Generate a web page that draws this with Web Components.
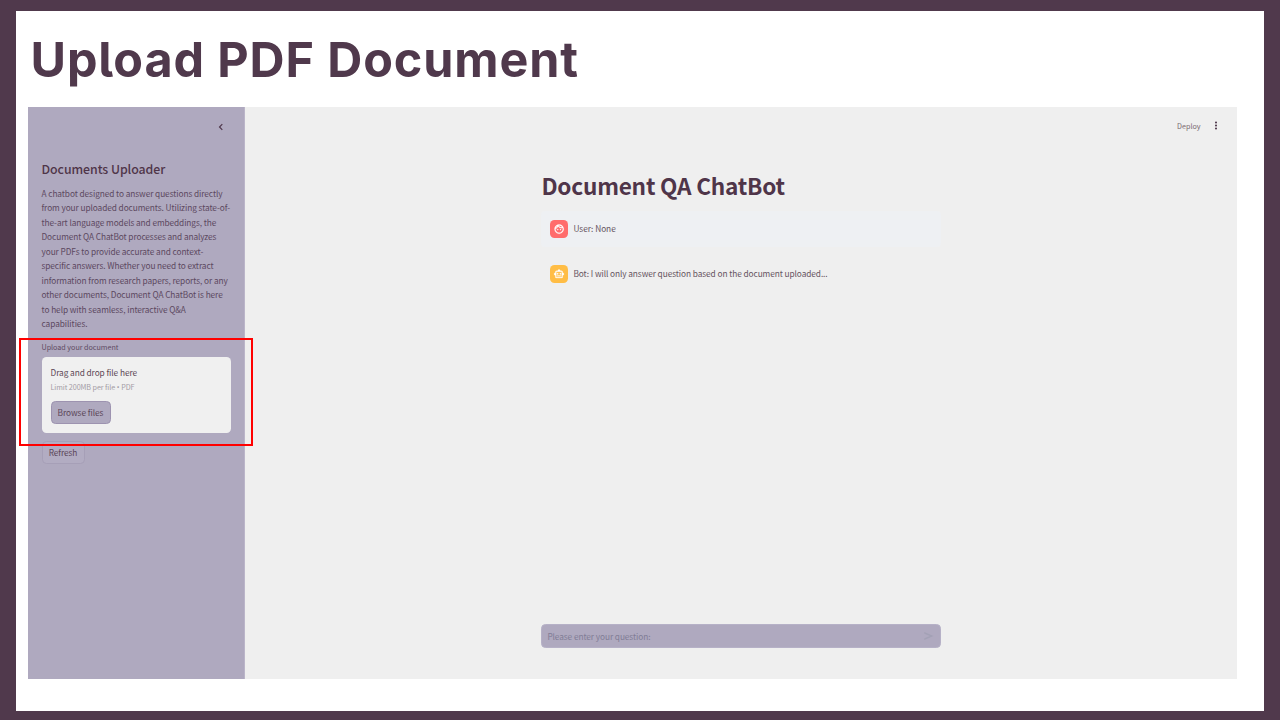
<!DOCTYPE html>
<html lang="en">
<head>
<meta charset="utf-8">
<title>Upload PDF Document</title>
<style>
html,body{margin:0;width:1280px;height:720px;overflow:hidden;background:#50394c}
body{font-family:"Noto Sans CJK SC","Noto Sans",sans-serif}
</style>
</head>
<body>
<slide-page></slide-page>
<script>
const define = (name, html, after) => customElements.define(name, class extends HTMLElement {
  constructor() {
    super();
    this.attachShadow({ mode: "open" }).innerHTML = html;
  }
  connectedCallback() { if (after) after.call(this); }
});

/* One line of text whose tracking is set so that it spans the given width. */
define("text-line", `<style>
:host{display:block;white-space:nowrap}
span{display:inline-block;white-space:pre}
</style><span><slot></slot></span>`, function () {
  const span = this.shadowRoot.querySelector("span");
  const want = parseFloat(this.getAttribute("span"));
  const gap = (want - span.getBoundingClientRect().width) / this.textContent.length;
  span.style.letterSpacing = gap.toFixed(4) + "px";
});

define("user-avatar", `<style>
:host{display:block;width:18px;height:18px;border-radius:4.5px;background:#ff6c6c}
svg{display:block;width:18px;height:18px}
</style><svg viewBox="0 0 18 18"><g transform="translate(3.6 3.6) scale(.46)" fill="#fff" stroke="#fff" stroke-width=".5"><path d="M10.25 13c0 .69-.56 1.25-1.25 1.25S7.75 13.69 7.75 13s.56-1.25 1.25-1.25 1.25.56 1.25 1.25zM15 11.75c-.69 0-1.25.56-1.25 1.25s.56 1.25 1.25 1.25 1.25-.56 1.25-1.25-.56-1.25-1.25-1.25zm7 .25c0 5.52-4.48 10-10 10S2 17.52 2 12 6.48 2 12 2s10 4.48 10 10zM10.66 4.12C12.06 6.44 14.6 8 17.5 8c.46 0 .91-.05 1.34-.12C17.44 5.56 14.9 4 12 4c-.46 0-.91.05-1.34.12zM4.42 9.47a8.046 8.046 0 0 0 3.66-4.44 8.046 8.046 0 0 0-3.66 4.44zM20 12c0-.78-.12-1.53-.33-2.24-.7.15-1.42.24-2.17.24a10 10 0 0 1-7.76-3.69A10.016 10.016 0 0 1 4 11.86c.01.04 0 .09 0 .14 0 4.41 3.59 8 8 8s8-3.59 8-8z"/></g></svg>`);

define("bot-avatar", `<style>
:host{display:block;width:18px;height:18px;border-radius:4.5px;background:#ffbd45}
svg{display:block;width:18px;height:18px}
</style><svg viewBox="0 0 18 18"><g transform="translate(3.6 3.6) scale(.452)" fill="#fff" stroke="#fff" stroke-width=".5"><path fill-rule="evenodd" d="M20 9V7c0-1.1-.9-2-2-2h-3c0-1.66-1.34-3-3-3S9 3.34 9 5H6c-1.1 0-2 .9-2 2v2c-1.66 0-3 1.34-3 3s1.34 3 3 3v4c0 1.1.9 2 2 2h12c1.1 0 2-.9 2-2v-4c1.66 0 3-1.34 3-3s-1.34-3-3-3zM18 19H6V7h12v12zM9 13a1.5 1.5 0 1 0 0-3 1.5 1.5 0 0 0 0 3zm6 0a1.5 1.5 0 1 0 0-3 1.5 1.5 0 0 0 0 3zM8 15h8v2H8z"/></g></svg>`);

define("chat-message", `<style>
:host{display:flex;align-items:center;box-sizing:border-box;height:36px;padding-left:9px;gap:5px;border-radius:4px;font-size:8.3px;line-height:14px;color:#665461}
.body{margin-top:-1px}
</style><slot name="avatar"></slot><div class="body"><slot></slot></div>`);

define("chat-input", `<style>
:host{display:flex;align-items:center;justify-content:space-between;box-sizing:border-box;width:399.5px;height:24px;padding:0 6px 0 5px;border-radius:4.5px;background:#afa9bf;border:1px solid #b6b1c7;font-size:8.3px;line-height:14px;color:#817d96}
text-line{margin-top:-1px}
svg{display:block;width:10px;height:10px}
</style><text-line span="103">Please enter your question:</text-line>
<svg viewBox="0 0 10 10"><path d="M.3 1 9.5 5 .3 9V7.2L6 5 .3 2.8z" fill="#a3a1b5"/></svg>`);

define("file-drop", `<style>
:host{display:block;box-sizing:border-box;width:189px;height:76px;padding:8.5px 9px;border-radius:4.5px;background:#f0f0f0}
.head{font-size:8.3px;line-height:14px;margin-top:-1px;color:#5d4856}
.hint{font-size:7.2px;line-height:14px;margin-top:1px;color:#a39ca5}
.dot{font-family:"Noto Sans",sans-serif}
button{display:flex;align-items:center;justify-content:center;box-sizing:border-box;width:60px;height:23px;margin:7.5px 0 0;padding:0 0 1px;border:1px solid #9d93b0;border-radius:4.5px;background:#afa9bf;font:8.3px/14px "Noto Sans CJK SC",sans-serif;color:#5b4658}
</style><text-line class="head" span="86.5">Drag and drop file here</text-line>
<text-line class="hint" span="84">Limit 200MB per file<span class="dot"> • </span>PDF</text-line>
<button><text-line span="45.8">Browse files</text-line></button>`);

define("side-panel", `<style>
:host{display:block;box-sizing:border-box;width:217px;height:572px;padding:15px 14px 0 13.5px;background:#afa9bf;border-right:1px solid #bbb5c9}
.close{display:block;width:9px;height:10px;margin-left:174.5px}
h2{margin:27px 0 0;font-weight:500;font-size:12.35px;line-height:20px;color:#4f3549}
.copy{margin-top:6.8px;font-size:8.3px;line-height:14.5px;color:#5c4860}
.label{margin-top:9.9px;font-size:7.2px;line-height:13px;color:#5e4a62}
file-drop{margin-top:3.5px}
button{display:flex;align-items:center;justify-content:center;box-sizing:border-box;width:43px;height:23px;margin:8px 0 0;padding:0 0 1px;border:1px solid #a69fb7;border-radius:4.5px;background:#b2acc2;font:8.3px/14px "Noto Sans CJK SC",sans-serif;color:#5b4658}
</style>
<svg class="close" viewBox="0 0 9 10"><path d="M6.3 2.1 3.5 5l2.8 2.9" fill="none" stroke="#50394c" stroke-width="1.2"/></svg>
<h2><text-line span="123.7">Documents Uploader</text-line></h2>
<div class="copy">
<text-line span="181">A chatbot designed to answer questions directly</text-line>
<text-line span="188.5">from your uploaded documents. Utilizing state-of-</text-line>
<text-line span="174.7">the-art language models and embeddings, the</text-line>
<text-line span="174.9">Document QA ChatBot processes and analyzes</text-line>
<text-line span="161.7">your PDFs to provide accurate and context-</text-line>
<text-line span="172">specific answers. Whether you need to extract</text-line>
<text-line span="186.2">information from research papers, reports, or any</text-line>
<text-line span="181.2">other documents, Document QA ChatBot is here</text-line>
<text-line span="144.3">to help with seamless, interactive Q&amp;A</text-line>
<text-line span="46">capabilities.</text-line>
</div>
<text-line class="label" span="77">Upload your document</text-line>
<file-drop></file-drop>
<button><text-line span="28.7">Refresh</text-line></button>`);

define("chat-view", `<style>
:host{display:flex;flex-direction:column;flex:1;height:572px;background:#efefef}
header{display:flex;justify-content:flex-end;align-items:center;height:37px;padding-right:19px;gap:13.5px;font-size:7.2px;line-height:12px;color:#79696f}
header svg{width:4px;height:9px}
main{display:flex;flex-direction:column;width:400px;flex:1;margin-left:296.4px;padding-bottom:31px}
h1{margin:23px 0 0;font-weight:700;font-size:22.6px;line-height:38px;color:#4f3549}
.user{margin-top:5.8px;background:#eef0f3}
.bot{margin-top:9.2px}
chat-input{margin-top:auto}
</style>
<header><text-line span="23.5">Deploy</text-line><svg viewBox="0 0 4 9"><g fill="#50394c"><circle cx="2" cy="1.5" r="1.05"/><circle cx="2" cy="4.5" r="1.05"/><circle cx="2" cy="7.5" r="1.05"/></g></svg></header>
<main>
<h1><text-line span="243.5">Document QA ChatBot</text-line></h1>
<chat-message class="user"><user-avatar slot="avatar"></user-avatar><text-line span="42.3">User: None</text-line></chat-message>
<chat-message class="bot"><bot-avatar slot="avatar"></bot-avatar><text-line span="254.2">Bot: I will only answer question based on the document uploaded...</text-line></chat-message>
<chat-input></chat-input>
</main>`);

define("slide-page", `<style>
:host{display:block;position:relative;box-sizing:border-box;width:1280px;height:720px;padding:11px 16px 9px;background:#50394c}
.sheet{box-sizing:border-box;height:700px;padding:19px 27px 0 12px;background:#fff}
.title{margin:0 0 17px 2.5px;font:700 48.5px/60px Inter,sans-serif;font-feature-settings:"cv05","ss02";color:#50394c}
.shot{display:flex;width:1209px}
.mark{position:absolute;left:19px;top:338px;box-sizing:border-box;width:234px;height:108px;border:2px solid #f00}
</style>
<div class="sheet">
<text-line class="title" span="548.5">Upload PDF Document</text-line>
<div class="shot"><side-panel></side-panel><chat-view></chat-view></div>
</div>
<div class="mark"></div>`);
</script>
</body>
</html>
